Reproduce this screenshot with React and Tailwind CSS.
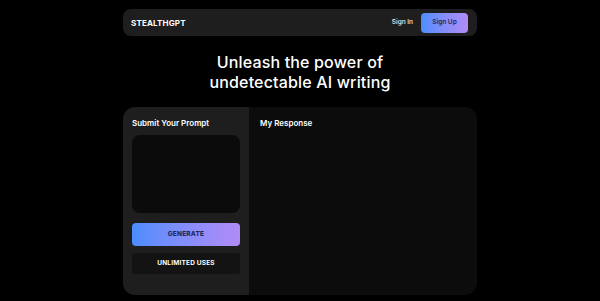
export default function App() {
  const font = { fontFamily: "Inter, 'Open Sans', sans-serif" };
  return (
    <div className="w-[600px] h-[301px] bg-black overflow-hidden flex flex-col items-center" style={font}>
      <nav className="mt-[9px] w-[354px] h-[27px] bg-[#1e1e1e] rounded-[8px] flex items-center pl-[8px] pr-[9px]">
        <span className="text-white font-bold text-[8px] tracking-[0.02em]">STEALTHGPT</span>
        <span className="ml-auto text-[#f2f2f2] text-[6.5px] font-medium">Sign In</span>
        <button className="ml-[8px] w-[47px] h-[20px] rounded-[4px] bg-gradient-to-r from-[#4a8dfd] to-[#b18bf6] text-[#1d2a5c] text-[6.5px] font-semibold">
          Sign Up
        </button>
      </nav>
      <h1 className="mt-[16px] text-white text-[16px] font-medium leading-[20px] text-center tracking-[0.01em]">
        Unleash the power of<br />undetectable AI writing
      </h1>
      <div className="mt-[15px] w-[354px] h-[188px] rounded-[12px] overflow-hidden flex">
        <div className="w-[126px] bg-[#1e1e1e] flex flex-col px-[9px] pt-[12px]">
          <div className="text-white text-[8px] font-semibold leading-[8px]">Submit Your Prompt</div>
          <div className="mt-[8px] h-[78px] bg-[#0b0b0b] rounded-[8px]"></div>
          <button className="mt-[10px] h-[23px] rounded-[4px] bg-gradient-to-r from-[#4a8dfd] to-[#b18bf6] text-[#1d2a5c] text-[6.5px] font-extrabold tracking-[0.03em]">
            GENERATE
          </button>
          <div className="mt-[7px] h-[21px] rounded-[3px] bg-[#131313] text-white text-[6.5px] font-bold tracking-[0.03em] flex items-center justify-center">
            UNLIMITED USES
          </div>
        </div>
        <div className="flex-1 bg-[#0c0c0c] pl-[11px] pt-[12px]">
          <div className="text-white text-[8px] font-semibold leading-[8px]">My Response</div>
        </div>
      </div>
    </div>
  );
}
